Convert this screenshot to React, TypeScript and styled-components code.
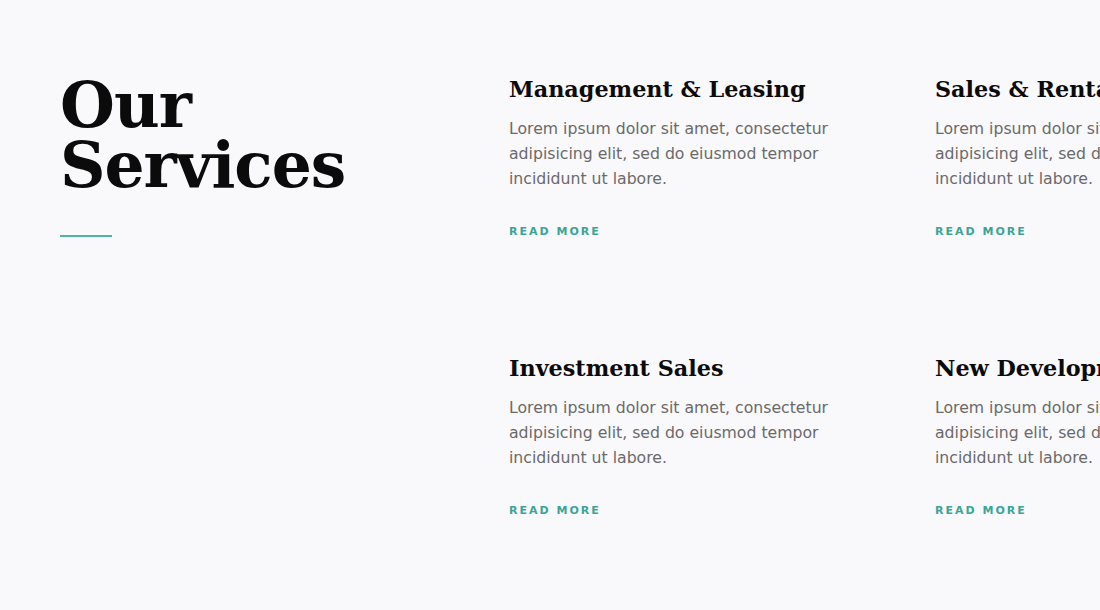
import React from "react";
import styled, { createGlobalStyle } from "styled-components";

const Global = createGlobalStyle`
  html, body { margin: 0; padding: 0; background: #f9f8fb; }
  body { overflow: hidden; }
  * { box-sizing: border-box; }
`;

const Page = styled.section`
  width: 1100px;
  height: 610px;
  overflow: hidden;
  background: #f9f8fb;
  display: grid;
  grid-template-columns: 449px 426px 426px;
  padding: 70px 0 0 60px;
`;

const Intro = styled.div`
  display: flex;
  flex-direction: column;
`;

const Title = styled.h1`
  margin: 5px 0 0;
  font-family: "DejaVu Serif", "Liberation Serif", serif;
  font-weight: 700;
  font-size: 63px;
  line-height: 60px;
  letter-spacing: -1px;
  color: #0b0b0b;
`;

const Rule = styled.div`
  width: 52px;
  height: 2px;
  background: #4fb3a6;
  margin-top: 40px;
`;

const Column = styled.div`
  display: flex;
  flex-direction: column;
  gap: 115px;
  padding-top: 4px;
`;

const Card = styled.article`
  display: flex;
  flex-direction: column;
  white-space: nowrap;
`;

const CardTitle = styled.h2`
  margin: 0;
  font-family: "DejaVu Serif", "Liberation Serif", serif;
  font-weight: 700;
  font-size: 22.3px;
  line-height: 30px;
  color: #0b0b0b;
`;

const Body = styled.p`
  margin: 12px 0 0;
  font-family: "DejaVu Sans", "Noto Sans", sans-serif;
  font-size: 15.7px;
  line-height: 25px;
  color: #6a6a6a;
`;

const More = styled.a`
  margin-top: 34px;
  font-family: "DejaVu Sans", "Noto Sans", sans-serif;
  font-size: 11px;
  font-weight: 600;
  letter-spacing: 2px;
  color: #3aa596;
  text-decoration: none;
  text-transform: uppercase;
`;

const cards = [
  ["Management & Leasing", "Investment Sales"],
  ["Sales & Rentals", "New Developments"],
];

export default function App() {
  return (
    <>
      <Global />
      <Page>
        <Intro>
          <Title>
            Our
            <br />
            Services
          </Title>
          <Rule />
        </Intro>
        {cards.map((col, i) => (
          <Column key={i}>
            {col.map((t) => (
              <Card key={t}>
                <CardTitle>{t}</CardTitle>
                <Body>
                  Lorem ipsum dolor sit amet, consectetur
                  <br />
                  adipisicing elit, sed do eiusmod tempor
                  <br />
                  incididunt ut labore.
                </Body>
                <More href="#">Read More</More>
              </Card>
            ))}
          </Column>
        ))}
      </Page>
    </>
  );
}
